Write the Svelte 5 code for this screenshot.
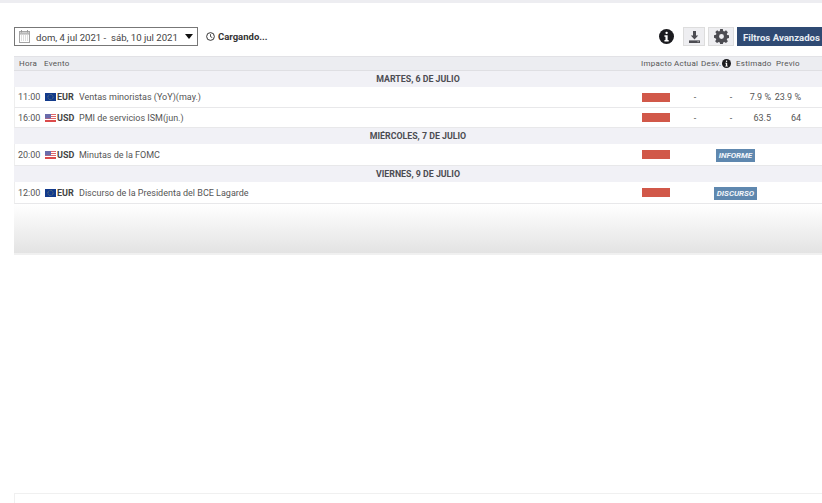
<script>
  const days = [
    { title: 'MARTES, 6 DE JULIO', rows: [
      { time: '11:00', cur: 'EUR', name: 'Ventas minoristas (YoY)(may.)', actual: '-', dev: '-', est: '7.9 %', prev: '23.9 %' },
      { time: '16:00', cur: 'USD', name: 'PMI de servicios ISM(jun.)', actual: '-', dev: '-', est: '63.5', prev: '64' }
    ]},
    { title: 'MIÉRCOLES, 7 DE JULIO', rows: [
      { time: '20:00', cur: 'USD', name: 'Minutas de la FOMC', badge: 'INFORME' }
    ]},
    { title: 'VIERNES, 9 DE JULIO', rows: [
      { time: '12:00', cur: 'EUR', name: 'Discurso de la Presidenta del BCE Lagarde', badge: 'DISCURSO' }
    ]}
  ];
</script>

{#snippet info(size)}
  <svg class="info" width={size} height={size} viewBox="0 0 16 16">
    <circle cx="8" cy="8" r="8" fill="#1b1b1f" />
    <rect x="6.9" y="2.8" width="2.4" height="2.4" rx="1" fill="#fff" />
    <path d="M5.8 6.6h3.4v5.2h1.1v1.6H5.8v-1.6h1.1V8.2H5.8z" fill="#fff" />
  </svg>
{/snippet}

{#snippet flag(cur)}
  {#if cur === 'EUR'}
    <svg class="flag" width="11" height="8" viewBox="0 0 11 8">
      <rect width="11" height="8" fill="#123a8c" />
      <circle cx="5.5" cy="4" r="2.6" fill="none" stroke="#8f9a6a" stroke-width="0.7" stroke-dasharray="0.9 0.7" />
    </svg>
  {:else}
    <svg class="flag" width="11" height="8" viewBox="0 0 11 8">
      <rect width="11" height="8" fill="#fff" />
      <rect y="0" width="11" height="1" fill="#e0666a" />
      <rect y="2" width="11" height="1" fill="#e0666a" />
      <rect y="4" width="11" height="1" fill="#e0666a" />
      <rect y="6" width="11" height="2" fill="#dc4b4b" />
      <rect width="6" height="4.5" fill="#6a6cab" />
    </svg>
  {/if}
{/snippet}

<div class="page">
  <div class="topbar"></div>

  <div class="toolbar">
    <div class="range">
      <svg class="cal" width="11" height="13" viewBox="0 0 11 13">
        <rect x="0.5" y="1.5" width="10" height="11" fill="#fff" stroke="#a5a5a5" />
        <rect x="0.5" y="1.5" width="10" height="2.5" fill="#cfcfcf" stroke="#a5a5a5" />
        <path d="M2.5 0v2.5M8.5 0v2.5" stroke="#999" />
        <path d="M2 6h7M2 8h7M2 10h7" stroke="#bdbdbd" stroke-dasharray="1 1" />
      </svg>
      <span class="dates">dom, 4 jul 2021 -&nbsp; sáb, 10 jul 2021</span>
      <svg class="caret" width="8" height="5" viewBox="0 0 8 5"><path d="M0 0h8L4 5z" fill="#111" /></svg>
    </div>
    <div class="loading">
      <svg width="9" height="9" viewBox="0 0 10 10">
        <circle cx="5" cy="5" r="4.3" fill="none" stroke="#222" stroke-width="1" />
        <path d="M5 2.4V5.2L7 6.2" fill="none" stroke="#222" stroke-width="0.9" />
      </svg>
      <span>Cargando...</span>
    </div>
    <div class="actions">
      {@render info(15)}
      <button class="tool dl" aria-label="Descargar">
        <svg width="11" height="12" viewBox="0 0 11 12">
          <path d="M4 0h3v4.5h2.2L5.5 8.6 1.8 4.5H4z" fill="#4c4c52" />
          <rect x="0" y="9.4" width="11" height="2.6" fill="#4c4c52" />
          <rect x="8.6" y="10.2" width="1" height="1" fill="#ddd" />
        </svg>
      </button>
      <button class="tool gear" aria-label="Ajustes">
        <svg width="15" height="15" viewBox="0 0 16 16">
          <path fill-rule="evenodd" fill="#4c4c52" d="M6.6 0h2.8l.4 2.1 1.2.5 1.8-1.2 2 2-1.2 1.8.5 1.2 2.1.4v2.8l-2.1.4-.5 1.2 1.2 1.8-2 2-1.8-1.2-1.2.5-.4 2.1H6.6l-.4-2.1-1.2-.5-1.8 1.2-2-2 1.2-1.8-.5-1.2L0 9.4V6.6l2.1-.4.5-1.2L1.4 3.2l2-2L5.2 2.6l1-.5zM8 5.4a2.6 2.6 0 1 0 0 5.2 2.6 2.6 0 0 0 0-5.2z" />
        </svg>
      </button>
      <button class="filters">Filtros Avanzados</button>
    </div>
  </div>

  <div class="table">
    <div class="row head">
      <span class="c-time">Hora</span>
      <span class="c-ev">Evento</span>
      <span class="c-imp">Impacto</span>
      <span class="c-act">Actual</span>
      <span class="c-dev">Desv.{@render info(9)}</span>
      <span class="c-est">Estimado</span>
      <span class="c-prev">Previo</span>
    </div>
    {#each days as d}
      <div class="day">{d.title}</div>
      {#each d.rows as r}
        <div class="row item" class:tall={r.badge}>
          <span class="c-time">{r.time}</span>
          <span class="c-flag">{@render flag(r.cur)}<b>{r.cur}</b></span>
          <span class="c-name">{r.name}</span>
          <span class="c-imp"><i class="bar"></i></span>
          {#if r.badge}
            <span class="c-badge"><em class="badge">{r.badge}</em></span>
          {:else}
            <span class="c-act">{r.actual}</span>
            <span class="c-dev">{r.dev}</span>
            <span class="c-est">{r.est}</span>
            <span class="c-prev">{r.prev}</span>
          {/if}
        </div>
      {/each}
    {/each}
    <div class="fade"></div>
  </div>

  <div class="bottom"></div>
</div>

<style>
  :global(body) {
    margin: 0;
    background: #fff;
    overflow: hidden;
  }
  .page {
    width: 822px;
    height: 503px;
    overflow: hidden;
    font-family: Roboto, "Liberation Sans", sans-serif;
    color: #4a4a4a;
    font-size: 9px;
    display: flex;
    flex-direction: column;
  }
  .topbar {
    height: 3px;
    background: #ededf1;
    flex: none;
  }
  .toolbar {
    display: flex;
    align-items: center;
    height: 19px;
    margin-top: 24px;
    padding-left: 14px;
    flex: none;
  }
  .range {
    box-sizing: border-box;
    width: 184px;
    height: 19px;
    border: 1px solid #777;
    display: flex;
    align-items: center;
    padding-left: 4px;
    color: #444;
    font-size: 9.6px;
  }
  .dates {
    margin-left: 6px;
    padding-top: 1px;
    white-space: nowrap;
    flex: 1;
  }
  .caret {
    margin-right: 4px;
  }
  .loading {
    display: flex;
    align-items: center;
    gap: 3px;
    margin-left: 8px;
    font-weight: 700;
    font-size: 9.5px;
    color: #333;
  }
  .actions {
    margin-left: auto;
    display: flex;
    align-items: center;
  }
  .tool {
    box-sizing: border-box;
    height: 19px;
    padding: 0;
    background: #eeeef1;
    border: 1px solid #ddd;
    display: flex;
    align-items: center;
    justify-content: center;
  }
  .dl { width: 22px; margin-left: 9px; }
  .gear { width: 26px; margin-left: 3px; }
  .filters {
    height: 19px;
    width: 85px;
    margin-left: 3px;
    padding: 1px 0 0 6px;
    border: 0;
    background: #2f4a73;
    color: #e8edf4;
    font: 700 9.6px Roboto, "Liberation Sans", sans-serif;
    text-align: left;
    white-space: nowrap;
  }
  .table {
    margin-top: 10px;
    margin-left: 14px;
    width: 808px;
    flex: none;
  }
  .row {
    display: grid;
    grid-template-columns: 30px 34px 563px 38px 30px 38px 23px 30px;
    align-items: center;
    white-space: nowrap;
    box-sizing: border-box;
  }
  .head {
    height: 15px;
    background: #ecedf1;
    border-top: 1px solid #e2e2e6;
    border-bottom: 1px solid #dfdfe3;
    font-size: 8px;
    letter-spacing: 0.25px;
    color: #555;
    grid-template-columns: 30px 597px 33px 27px 35px 40px 1fr;
  }
  .head .c-time { padding-left: 5px; }
  .head .c-dev { display: flex; align-items: center; gap: 1px; }
  .info { display: block; flex: none; }
  .day {
    height: 16px;
    line-height: 17px;
    background: #f1f1f6;
    text-align: center;
    font-weight: 700;
    font-size: 8.8px;
    color: #4c4c52;
  }
  .item {
    height: 21px;
    background: #fff;
    border-left: 1px solid #eee;
    border-bottom: 1px solid #e8e8ea;
    font-size: 9px;
    color: #555;
  }
  .item + .item { height: 20px; }
  .item.tall { height: 22px; }
  .item .c-time { padding-left: 3px; }
  .c-flag {
    display: flex;
    align-items: center;
    gap: 1px;
  }
  .c-flag b {
    font-weight: 700;
    font-size: 9px;
    color: #444;
  }
  .flag { display: block; flex: none; }
  .c-name { overflow: hidden; }
  .item .c-imp { display: block; line-height: 0; }
  .bar {
    display: block;
    width: 28px;
    height: 9px;
    background: #d15849;
  }
  .item .c-act { text-align: center; }
  .item .c-dev { text-align: center; padding-left: 4px; }
  .item .c-est, .item .c-prev {
    text-align: right;
    direction: rtl;
    unicode-bidi: plaintext;
  }
  .c-badge {
    grid-column: 5 / span 3;
    padding-top: 2px;
    padding-left: 20px;
    text-align: center;
  }
  .badge {
    display: inline-block;
    background: #5f88af;
    color: #f2f5f9;
    font-weight: 700;
    font-style: italic;
    font-size: 8px;
    line-height: 13px;
    padding: 0 2.5px;
  }
  .fade {
    height: 49px;
    background: linear-gradient(#fff, #e3e3e3);
    border-bottom: 2px solid #f0f0f0;
    box-sizing: content-box;
  }
  .bottom {
    margin-top: 238px;
    margin-left: 14px;
    height: 10px;
    border-top: 1px solid #f0f0f0;
    border-left: 1px solid #f0f0f0;
    flex: none;
  }
</style>
